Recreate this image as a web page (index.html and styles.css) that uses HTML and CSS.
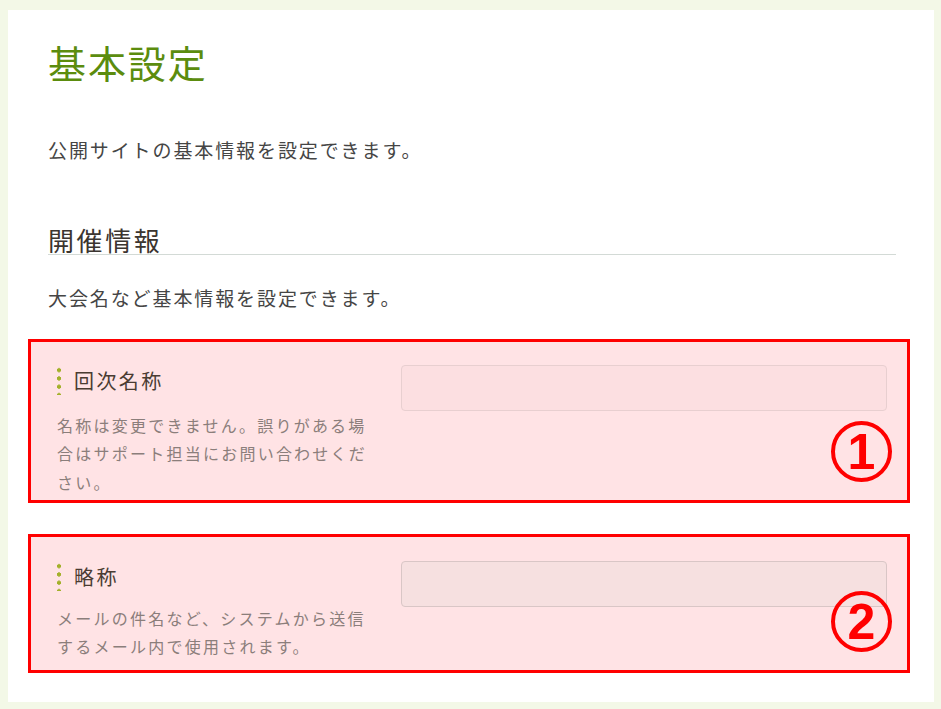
FILE: index.html
```html
<!DOCTYPE html>
<html lang="ja">
<head>
<meta charset="utf-8">
<title>基本設定</title>
<link rel="stylesheet" href="styles.css">
</head>
<body>
<main class="page">
  <h1 class="title">基本設定</h1>
  <p class="lead">公開サイトの基本情報を設定できます。</p>

  <section class="section">
    <h2 class="section-title">開催情報</h2>
    <p class="section-lead">大会名など基本情報を設定できます。</p>

    <div class="field field-first">
      <div class="field-info">
        <div class="field-label"><span class="dots"></span>回次名称</div>
        <p class="field-help">名称は変更できません。誤りがある場合はサポート担当にお問い合わせください。</p>
      </div>
      <div class="field-control">
        <input class="input" type="text" aria-label="回次名称">
      </div>
      <span class="marker marker-1">1</span>
    </div>

    <div class="field field-second">
      <div class="field-info">
        <div class="field-label"><span class="dots"></span>略称</div>
        <p class="field-help">メールの件名など、システムから送信するメール内で使用されます。</p>
      </div>
      <div class="field-control">
        <input class="input input-muted" type="text" aria-label="略称">
      </div>
      <span class="marker marker-2">2</span>
    </div>
  </section>
</main>
</body>
</html>
```

FILE: styles.css
```css
* { box-sizing: border-box; }

html, body {
  margin: 0;
  padding: 0;
}

body {
  background: #f3f8e7;
  font-family: "Noto Sans CJK JP", "Noto Sans", sans-serif;
  color: #4a4a4a;
}

.page {
  margin: 10px 7px 7px 8px;
  height: 692px;
  background: #ffffff;
  padding: 30px 38px 0 40px;
}

.title {
  margin: 0;
  font-size: 38px;
  line-height: 44px;
  font-weight: 400;
  letter-spacing: 0.05em;
  color: #5b8c0e;
}

.lead {
  margin: 52px 0 0;
  font-size: 19px;
  line-height: 28px;
  letter-spacing: 0.1em;
  color: #454545;
}

.section-title {
  margin: 62px 0 0;
  font-size: 26px;
  line-height: 28px;
  font-weight: 400;
  letter-spacing: 0.1em;
  color: #3b3530;
  border-bottom: 1px solid #d3dad6;
}

.section-lead {
  margin: 29px 0 0;
  font-size: 19px;
  line-height: 28px;
  letter-spacing: 0.1em;
  color: #454545;
}

.field {
  position: relative;
  display: flex;
  gap: 24px;
  margin: 27px -14px 0 -20px;
  padding: 23px 20px 4px 26px;
  background: #ffe3e5;
  border: 3px solid #ff0000;
}

.field-second {
  margin-top: 31px;
  padding-top: 24px;
  padding-bottom: 9px;
}

.field-info {
  width: 320px;
  flex: none;
}

.field-label {
  display: flex;
  align-items: center;
  gap: 13px;
  margin-top: 1px;
  height: 29px;
  font-size: 20px;
  line-height: 29px;
  letter-spacing: 0.12em;
  color: #4a3c32;
}

.dots {
  width: 4px;
  height: 29px;
  flex: none;
  background: radial-gradient(circle, #a3b02a 1.8px, transparent 2.3px) 0 0 / 4px 8.3px repeat-y;
}

.field-help {
  margin: 15.5px 0 0;
  font-size: 16px;
  line-height: 28.5px;
  letter-spacing: 0.14em;
  color: #8b7e7b;
}

.field-second .field-help {
  margin-top: 12.75px;
}

.field-control {
  flex: 1;
}

.input {
  display: block;
  width: 100%;
  height: 46px;
  margin: 0;
  border: 1px solid #e8cfd0;
  border-radius: 4px;
  background: #fcdfe1;
  font: inherit;
}

.input-muted {
  background: #f6e0e0;
  border-color: #d9c6c6;
}

.marker {
  position: absolute;
  right: 15px;
  width: 61px;
  height: 61px;
  border: 4px solid #ff0000;
  border-radius: 50%;
  display: flex;
  align-items: center;
  justify-content: center;
  font-family: "Liberation Sans", Arial, sans-serif;
  font-weight: 700;
  font-size: 50px;
  line-height: 1;
  color: #ff0000;
}

.marker-1 { top: 79px; }
.marker-2 { top: 54px; }
```
